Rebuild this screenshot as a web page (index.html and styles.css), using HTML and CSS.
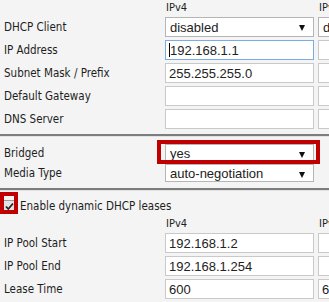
FILE: index.html
```html
<!DOCTYPE html>
<html>
<head>
<meta charset="utf-8">
<link rel="stylesheet" href="styles.css">
</head>
<body>
<div class="page">
  <div class="sheet">
    <section class="grid">
      <div class="lbl"></div><div class="hdr">IPv4</div><div class="hdr">IPv6</div>
      <div class="lbl">DHCP Client</div>
      <div class="field sel"><span>disabled</span><i class="tri"></i></div>
      <div class="field sel"><span>disabled</span><i class="tri"></i></div>
      <div class="lbl">IP Address</div>
      <div class="field focus"><b class="caret"></b><span>192.168.1.1</span></div>
      <div class="field"></div>
      <div class="lbl">Subnet Mask / Prefix</div>
      <div class="field"><span>255.255.255.0</span></div>
      <div class="field"></div>
      <div class="lbl">Default Gateway</div>
      <div class="field"></div>
      <div class="field"></div>
      <div class="lbl">DNS Server</div>
      <div class="field"></div>
      <div class="field"></div>
    </section>
    <div class="sep"></div>
    <section class="grid g2">
      <div class="lbl">Bridged</div>
      <div class="field sel"><span>yes</span><i class="tri"></i></div>
      <div></div>
      <div class="lbl">Media Type</div>
      <div class="field sel"><span>auto-negotiation</span><i class="tri"></i></div>
      <div></div>
    </section>
    <div class="sep"></div>
    <label class="check-row">
      <span class="box"><svg width="11" height="11" viewBox="0 0 11 11"><path d="M2 5.5 L4.3 8 L9 2.5" fill="none" stroke="#222" stroke-width="1.8"/></svg></span>
      <span class="check-text">Enable dynamic DHCP leases</span>
    </label>
    <section class="grid g3">
      <div class="lbl"></div><div class="hdr">IPv4</div><div class="hdr">IPv6</div>
      <div class="lbl">IP Pool Start</div>
      <div class="field"><span>192.168.1.2</span></div>
      <div class="field"></div>
      <div class="lbl">IP Pool End</div>
      <div class="field"><span>192.168.1.254</span></div>
      <div class="field"></div>
      <div class="lbl">Lease Time</div>
      <div class="field"><span>600</span></div>
      <div class="field"><span>600</span></div>
    </section>
  </div>
  <div class="mark mark-bridged"></div>
  <div class="mark mark-check"></div>
</div>
</body>
</html>
```
FILE: styles.css
```css
html, body {
  margin: 0;
  padding: 0;
  background: #f4f4f4;
}
.page {
  position: relative;
  width: 329px;
  height: 302px;
  overflow: hidden;
  font-family: "DejaVu Sans Condensed", "DejaVu Sans", Verdana, sans-serif;
  font-stretch: condensed;
  font-size: 11.5px;
  color: #1e1e1e;
}
.sheet {
  width: 480px;
}
.grid {
  display: grid;
  grid-template-columns: 161px 149px 149px;
  column-gap: 4px;
  row-gap: 3px;
  grid-auto-rows: 20px;
  grid-template-rows: 14px;
}
.lbl {
  padding-left: 4px;
  display: flex;
  align-items: center;
  white-space: nowrap;
}
.hdr {
  display: flex;
  align-items: center;
  padding-left: 1px;
  font-size: 11px;
}
.field {
  box-sizing: border-box;
  height: 20px;
  background: #fff;
  border: 1px solid #c9c9c9;
  display: flex;
  align-items: center;
  padding-left: 3px;
  font-family: "Liberation Sans", Arial, sans-serif;
  font-stretch: normal;
  font-size: 13px;
  color: #222;
  white-space: nowrap;
  overflow: hidden;
  position: relative;
}
.field.sel {
  border-color: #b5b5b5;
  padding-left: 4px;
}
.field.focus {
  border-color: #7aaee3;
}
.caret {
  display: inline-block;
  width: 1px;
  height: 14px;
  background: #000;
}
.tri {
  position: absolute;
  right: 8px;
  top: 7px;
  width: 0;
  height: 0;
  border-left: 3.5px solid transparent;
  border-right: 3.5px solid transparent;
  border-top: 6px solid #111;
}
.sep {
  height: 2px;
  background: #7d7d7d;
  margin: 5px 0 0;
  border-bottom: 1px solid #e2e2e2;
}
.g2 {
  grid-template-rows: 20px 20px;
  row-gap: 0;
  margin-top: 6px;
}
.g2 .field {
  height: 18px;
  margin-top: 1px;
}
.check-row {
  display: flex;
  align-items: center;
  height: 20px;
  margin-top: 5px;
  padding-left: 3px;
  gap: 4px;
}
.box {
  box-sizing: border-box;
  width: 13px;
  height: 13px;
  border: 1px solid #9a9a9a;
  background: #e3e3e3;
  display: flex;
  align-items: center;
  justify-content: center;
}
.check-text {
  white-space: nowrap;
}
.g3 {
  margin-top: 0;
}
.mark {
  position: absolute;
  border: 4px solid #c00000;
  box-sizing: border-box;
}
.mark-bridged {
  left: 157px;
  top: 140px;
  width: 163px;
  height: 24px;
}
.mark-check {
  left: 0;
  top: 192px;
  width: 18px;
  height: 22px;
}
```
